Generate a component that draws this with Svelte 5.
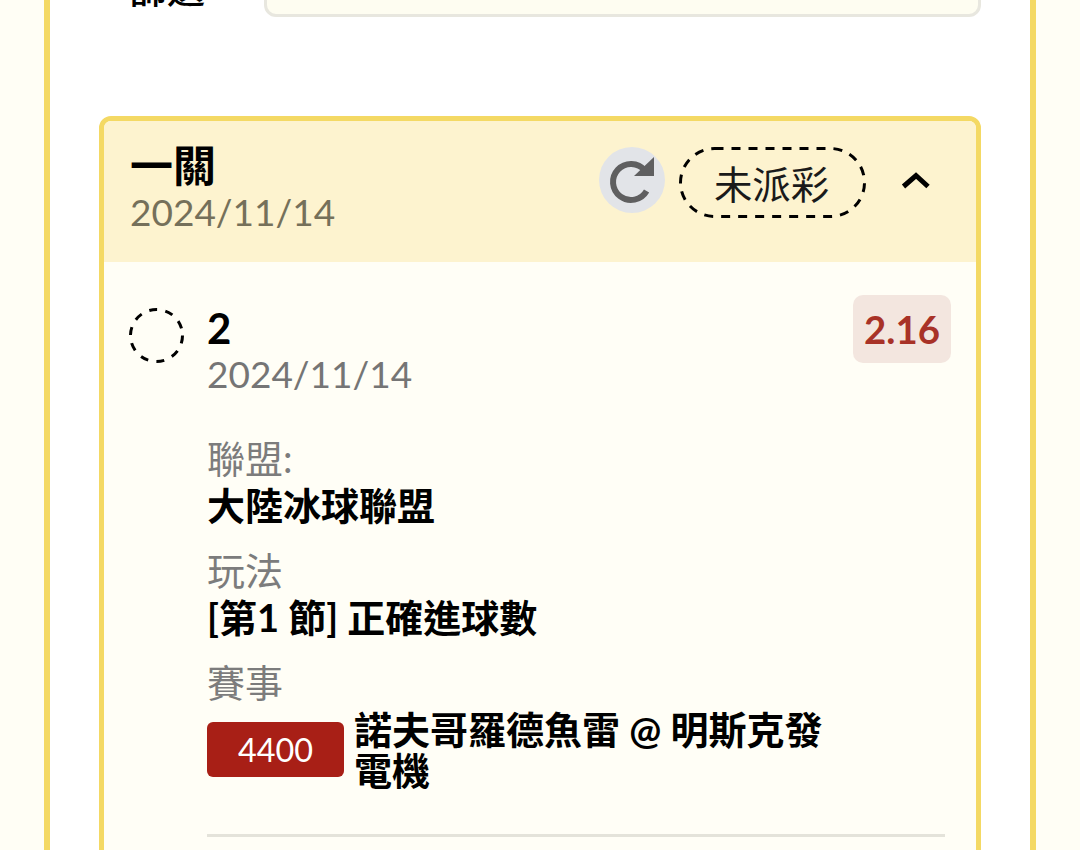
<script>
  const fields = [
    { label: '聯盟:', value: '大陸冰球聯盟' },
    { label: '玩法', value: '[第1 節] 正確進球數' },
  ];
</script>

<div class="page">
  <div class="panel">
    <div class="filter-row">
      <span class="filter-label">篩選</span>
      <div class="filter-input"></div>
    </div>

    <section class="card">
      <header class="card-hdr">
        <div class="hdr-text">
          <div class="hdr-title">一關</div>
          <div class="hdr-date">2024/11/14</div>
        </div>
        <div class="hdr-actions">
          <button class="refresh" aria-label="refresh">
            <svg width="66" height="66" viewBox="0 0 66 66">
              <path d="M45.8 23.4 A18 18 0 1 0 47.6 44" fill="none" stroke="#5f5f60" stroke-width="6" />
              <path d="M55 10 V29 H35 Z" fill="#5f5f60" />
            </svg>
          </button>
          <span class="status">
            <svg class="dash" width="187" height="71" viewBox="0 0 187 71">
              <rect x="1.5" y="1.5" width="184" height="68" rx="34" fill="none" stroke="#000" stroke-width="3" stroke-dasharray="9 8" />
            </svg>
            未派彩
          </span>
          <svg class="chevron" width="30" height="20" viewBox="0 0 30 20">
            <path d="M2.5 15.5 L15 4.5 L27 15.5" fill="none" stroke="#000" stroke-width="5" />
          </svg>
        </div>
      </header>

      <div class="card-body">
        <div class="leg">
          <svg class="radio" width="55" height="55" viewBox="0 0 55 55">
            <circle cx="27.5" cy="27.5" r="26" fill="none" stroke="#000" stroke-width="3" stroke-dasharray="8 8.34" />
          </svg>
          <div class="leg-main">
            <div class="leg-top">
              <div>
                <div class="leg-title">2</div>
                <div class="leg-date">2024/11/14</div>
              </div>
              <span class="odds">2.16</span>
            </div>

            {#each fields as f}
              <div class="field">
                <div class="field-label">{f.label}</div>
                <div class="field-value">{f.value}</div>
              </div>
            {/each}

            <div class="field">
              <div class="field-label">賽事</div>
              <div class="match">
                <span class="match-id">4400</span>
                <span class="match-name">諾夫哥羅德魚雷 @ 明斯克發電機</span>
              </div>
            </div>

            <hr class="divider" />
          </div>
        </div>
      </div>
    </section>
  </div>
</div>

<style>
  :global(body) {
    background: #fffef5;
    overflow: hidden;
    height: 850px;
  }
  .page {
    font-family: Lato, "Noto Sans CJK TC", sans-serif;
    height: 850px;
    overflow: hidden;
    padding: 0 44px;
  }
  .panel {
    margin-top: -40px;
    background: #fff;
    border: solid #f4d964;
    border-width: 0 6px;
    padding: 0 49px 40px;
    height: 1000px;
  }
  .filter-row {
    display: flex;
    align-items: center;
    height: 56px;
  }
  .filter-label {
    width: 134px;
    margin-left: 30px;
    flex-shrink: 0;
    font-size: 38px;
    line-height: 44px;
    font-weight: 500;
    margin-right: 1px;
  }
  .filter-input {
    flex: 1;
    height: 57px;
    background: #fefdf1;
    border: 3px solid #e8e7df;
    border-radius: 12px;
    box-sizing: border-box;
  }
  .card {
    margin-top: 100px;
    border: 5px solid #f4d964;
    border-radius: 12px;
    background: #fffef6;
    overflow: hidden;
  }
  .card-hdr {
    background: #fdf3cf;
    height: 141px;
    padding: 21px 26px 0;
    box-sizing: border-box;
    display: flex;
    justify-content: space-between;
  }
  .hdr-title {
    font-size: 43px;
    line-height: 48px;
    font-weight: 700;
    color: #000;
  }
  .hdr-date {
    font-size: 37px;
    line-height: 44px;
    color: #75705a;
  }
  .hdr-actions {
    display: flex;
    align-items: flex-start;
    padding-top: 5px;
    height: 72px;
  }
  .refresh {
    width: 66px;
    height: 66px;
    border-radius: 50%;
    border: none;
    padding: 0;
    background: #e2e4e8;
    display: flex;
  }
  .status {
    position: relative;
    margin-left: 14px;
    width: 187px;
    height: 71px;
    padding-right: 2px;
    padding-bottom: 2px;
    box-sizing: border-box;
    display: flex;
    align-items: center;
    justify-content: center;
    font-size: 38.4px;
    color: #1a1a1a;
  }
  .dash {
    position: absolute;
    inset: 0;
  }
  .chevron {
    margin: 24px 19px 0 35px;
  }
  .card-body {
    padding: 33px 31px 80px 25px;
  }
  .leg {
    display: flex;
  }
  .radio {
    margin-top: 13px;
    flex-shrink: 0;
  }
  .leg-main {
    flex: 1;
    margin-left: 23px;
  }
  .leg-top {
    display: flex;
    justify-content: space-between;
    align-items: flex-start;
    margin-bottom: 39px;
  }
  .leg-title {
    font-size: 42px;
    line-height: 48px;
    font-weight: 700;
    margin-top: 9px;
    color: #000;
  }
  .leg-date {
    font-size: 37px;
    line-height: 44px;
    color: #757575;
  }
  .odds {
    width: 98px;
    height: 68px;
    margin-right: -6px;
    border-radius: 10px;
    background: #f3e6df;
    color: #a83227;
    font-size: 38.4px;
    font-weight: 700;
    display: flex;
    align-items: center;
    justify-content: center;
  }
  .field {
    margin-top: 19px;
  }
  .field-label {
    font-size: 38px;
    line-height: 47px;
    color: #7c7c7c;
  }
  .field-value {
    font-size: 38px;
    line-height: 46px;
    font-weight: 700;
    color: #000;
  }
  .match {
    display: flex;
    align-items: center;
    gap: 10px;
    margin-top: 1px;
  }
  .match-id {
    width: 137px;
    height: 55px;
    flex-shrink: 0;
    border-radius: 6px;
    background: #a81f16;
    color: #fff;
    font-size: 32.4px;
    display: flex;
    align-items: center;
    justify-content: center;
  }
  .match-name {
    width: 490px;
    padding-top: 2px;
    font-size: 38px;
    line-height: 41px;
    font-weight: 700;
    color: #000;
  }
  .divider {
    margin: 43px 0 0;
    border: none;
    border-top: 3px solid #e4e3da;
  }
</style>
